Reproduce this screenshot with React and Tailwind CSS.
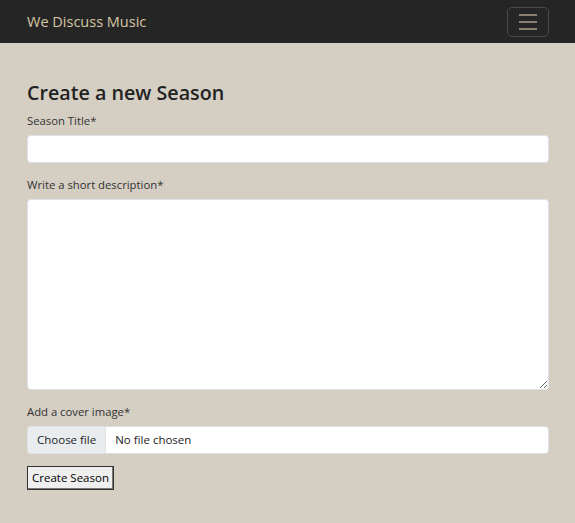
import React from "react";

const font = { fontFamily: '"Open Sans", "Noto Sans", sans-serif' };

const Navbar = () => (
  <nav className="h-[43px] bg-[#252525] flex items-center justify-between pl-[27px] pr-[26px]">
    <span className="text-[14.5px] text-[#d6c7a6]">We Discuss Music</span>
    <button className="w-[42px] h-[30px] border border-[#4a4a4a] rounded-[5px] flex flex-col items-center justify-center gap-[5px]">
      <span className="block w-[18px] h-[2px] bg-[#8c8070]" />
      <span className="block w-[18px] h-[2px] bg-[#8c8070]" />
      <span className="block w-[18px] h-[2px] bg-[#8c8070]" />
    </button>
  </nav>
);

const Label = ({ children }) => (
  <label className="block text-[11.3px] text-[#333] leading-[18px] mb-[5px]">{children}</label>
);

export default function App() {
  return (
    <div style={font} className="min-h-[523px] bg-[#d4cec3]">
      <Navbar />
      <form className="pl-[27px] pr-[26px] pt-[36px]">
        <h1 className="text-[19.7px] font-semibold text-[#222] leading-[28px] mb-[5px]">
          Create a new Season
        </h1>
        <Label>Season Title*</Label>
        <input
          type="text"
          className="block w-full h-[28px] bg-white rounded-[4px] border border-[#dee2e6] outline-none"
        />
        <div className="mt-[13px]">
          <Label>Write a short description*</Label>
          <textarea className="block w-full h-[191px] bg-white rounded-[4px] border border-[#dee2e6] outline-none resize-y" />
        </div>
        <div className="mt-[13px]">
          <Label>Add a cover image*</Label>
          <div className="flex h-[28px] w-full bg-white rounded-[4px] border border-[#dee2e6] overflow-hidden text-[11.5px] text-[#222]">
            <span className="flex items-center px-[9px] bg-[#e9ecef] border-r border-[#dee2e6]">Choose file</span>
            <span className="flex items-center pl-[9px]">No file chosen</span>
          </div>
        </div>
        <button
          type="button"
          className="mt-[12px] h-[24px] px-[4px] bg-[#efefef] border border-[#333] text-[11.5px] text-black leading-none shadow-[inset_-1px_-1px_0_#777]"
        >
          Create Season
        </button>
      </form>
    </div>
  );
}
